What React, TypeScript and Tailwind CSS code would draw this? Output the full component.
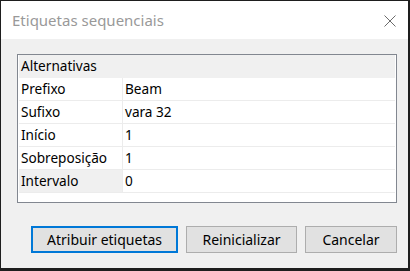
import React from 'react';

const rows: { label: string; value: string; active?: boolean }[] = [
    { label: 'Prefixo', value: 'Beam' },
    { label: 'Sufixo', value: 'vara 32' },
    { label: 'Início', value: '1' },
    { label: 'Sobreposição', value: '1' },
    { label: 'Intervalo', value: '0', active: true },
];

const font = { fontFamily: '"Segoe UI", "Noto Sans", "Open Sans", sans-serif' };

const App: React.FC = () => {
    return (
        <div
            className="w-[410px] h-[271px] bg-[#1e1e1e] pt-px pl-px pr-[2px] pb-[3px] flex text-[14px] text-black"
            style={font}
        >
            <div className="flex-1 flex flex-col">
                {/* Title bar */}
                <div className="h-[38px] bg-white flex items-center justify-between pl-[11px] pr-[12px]">
                    <span className="text-[15px] text-[#999999]">Etiquetas sequenciais</span>
                    <svg width="12" height="12" viewBox="0 0 12 12" className="mt-[2px]">
                        <path d="M0.5 0.5 L11.5 11.5 M11.5 0.5 L0.5 11.5" stroke="#6b6b6b" strokeWidth="1" fill="none" />
                    </svg>
                </div>

                {/* Body */}
                <div className="flex-1 bg-[#f0f0f0] pt-[15px] pl-[16px] pr-[11px] flex flex-col">
                    <div className="h-[149px] border border-[#828790] bg-white px-px flex flex-col text-[13.6px]">
                        <div className="h-[23px] bg-[#f0f0f0] flex items-center px-[2px]">Alternativas</div>
                        {rows.map((row) => (
                            <div key={row.label} className="h-[23px] flex border-b border-[#ececec]">
                                <div
                                    className={`w-[104px] flex items-center px-[2px] border-r border-[#ececec] ${row.active ? 'bg-[#f0f0f0]' : ''}`}
                                >
                                    {row.label}
                                </div>
                                <div className="flex-1 flex items-center px-[2px]">{row.value}</div>
                            </div>
                        ))}
                    </div>

                    {/* Buttons */}
                    <div className="mt-[23px] flex justify-end gap-2">
                        <button className="w-[147px] h-[27px] bg-[#e1e1e1] border-2 border-[#0078d7]">
                            Atribuir etiquetas
                        </button>
                        <button className="w-[111px] h-[27px] bg-[#e1e1e1] border border-[#adadad]">
                            Reinicializar
                        </button>
                        <button className="w-[92px] h-[27px] bg-[#e1e1e1] border border-[#adadad]">
                            Cancelar
                        </button>
                    </div>
                </div>
            </div>
        </div>
    );
};

export default App;
